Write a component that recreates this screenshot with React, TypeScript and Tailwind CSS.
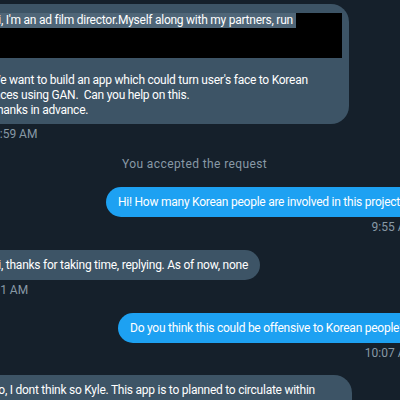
import React from "react";

function Time({ children, className = "" }: { children: React.ReactNode; className?: string }) {
  return (
    <div className={"mt-[3px] h-[14px] whitespace-nowrap text-[12px] leading-[14px] text-[#8899a6] " + className}>
      {children}
    </div>
  );
}

export default function App() {
  return (
    <div className="w-[400px] h-[400px] overflow-hidden bg-[#15202b] font-['Roboto',sans-serif]">
      <div className="flex flex-col -ml-[22px] w-[438px] pt-[4px] tracking-[-0.25px]">
        {/* incoming request */}
        <div className="self-start w-[371px] rounded-[18px] bg-[#3d5466] pl-[12px] pr-[7px] pt-[9px] pb-[6px] text-[12px] leading-[15px] text-white">
          <div className="flex">
            <span className="whitespace-nowrap bg-[#4f6678]">Hi, I'm an ad film director.Myself along with my partners, run&nbsp;</span>
            <div className="flex-1 bg-black" />
          </div>
          <div className="h-[30px] bg-black" />
          <div className="h-[15px]" />
          <div className="whitespace-nowrap">
            We want to build an app which could turn user's face to Korean
            <br />
            faces using GAN.&nbsp; Can you help on this.
            <br />
            Thanks in advance.
          </div>
        </div>
        <Time className="self-start ml-[15px] tracking-normal">9:59 AM</Time>

        <div className="mt-[16px] ml-[144px] h-[14px] whitespace-nowrap text-[12px] leading-[14px] tracking-[0.4px] text-[#8899a6]">
          You accepted the request
        </div>

        <div className="mt-[16px] self-start ml-[128px] rounded-[18px] bg-[#1da1f2] px-[12px] py-[7px] text-[12px] leading-[16px] text-white whitespace-nowrap">
          Hi! How many Korean people are involved in this project?
        </div>
        <Time className="self-end tracking-normal">9:55 AM</Time>

        <div className="mt-[16px] self-start rounded-[18px] bg-[#3d5466] px-[12px] py-[7px] text-[12px] leading-[16px] text-white whitespace-nowrap">
          Hi, thanks for taking time, replying. As of now, none
        </div>
        <Time className="self-start -ml-[1px] tracking-normal">10:01 AM</Time>

        <div className="mt-[16px] self-start ml-[140px] rounded-[18px] bg-[#1da1f2] px-[12px] py-[7px] text-[12px] leading-[16px] text-white whitespace-nowrap">
          Do you think this could be offensive to Korean people?
        </div>
        <Time className="self-end tracking-normal">10:07 AM</Time>

        <div className="mt-[15px] self-start w-[374px] rounded-[18px] bg-[#3d5466] px-[12px] py-[7px] text-[12px] leading-[16px] text-white">
          No, I dont think so Kyle. This app is to planned to circulate within friends and family.
        </div>
      </div>
    </div>
  );
}
